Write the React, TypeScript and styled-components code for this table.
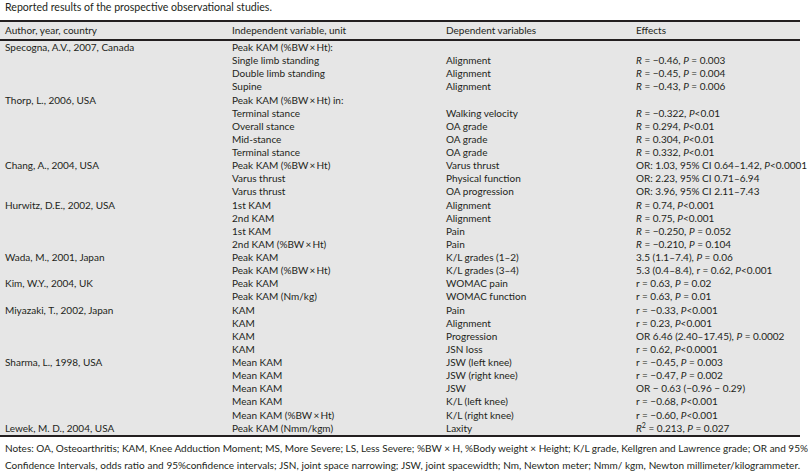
import React from "react";
import styled, { createGlobalStyle } from "styled-components";

const Global = createGlobalStyle`
  html, body { margin: 0; padding: 0; background: #ffffff; }
  body { font-family: Lato, "Liberation Sans", sans-serif; color: #231f20; }
`;

const Page = styled.div`
  width: 808px;
  height: 476px;
  overflow: hidden;
  background: #ffffff;
`;

const Caption = styled.div`
  height: 20px;
  padding-left: 5px;
  font-size: 10.6px;
  line-height: 14px;
  color: #231f20;
`;

const Table = styled.div`
  width: 800px;
  background: #e6e6e6;
  border-top: 2px solid #231f20;
  border-bottom: 2px solid #231f20;
`;

const Row = styled.div<{ $head?: boolean }>`
  display: grid;
  grid-template-columns: 227px 214px 190px 1fr;
  padding-left: 5px;
  height: ${(p) => (p.$head ? "17px" : "13.13px")};
  align-items: center;
  font-size: 10px;
  line-height: 13px;
  white-space: nowrap;
  border-bottom: ${(p) => (p.$head ? "2px solid #231f20" : "none")};
`;

const Body = styled.div``;

const Cell = styled.span``;

const Em = styled.i`
  font-style: italic;
`;

const Sup = styled.sup`
  font-size: 7px;
  line-height: 0;
  vertical-align: 4px;
`;

const Notes = styled.div`
  padding: 3px 8px 0 5px;
  font-size: 10px;
  line-height: 17px;
`;

const NoteLine = styled.div`
  text-align: justify;
  text-align-last: justify;
  white-space: nowrap;
`;

type R = [string, string, string, string];

const rows: R[] = [
  ["Specogna, A.V., 2007, Canada", "Peak KAM (%BW\u2009×\u2009Ht):", "", ""],
  ["", "Single limb standing", "Alignment", "*R* = −0.46, *P* = 0.003"],
  ["", "Double limb standing", "Alignment", "*R* = −0.45, *P* = 0.004"],
  ["", "Supine", "Alignment", "*R* = −0.43, *P* = 0.006"],
  ["Thorp, L., 2006, USA", "Peak KAM (%BW\u2009×\u2009Ht) in:", "", ""],
  ["", "Terminal stance", "Walking velocity", "*R* = −0.322, *P*<0.01"],
  ["", "Overall stance", "OA grade", "*R* = 0.294, *P*<0.01"],
  ["", "Mid-stance", "OA grade", "*R* = 0.304, *P*<0.01"],
  ["", "Terminal stance", "OA grade", "*R* = 0.332, *P*<0.01"],
  ["Chang, A., 2004, USA", "Peak KAM (%BW\u2009×\u2009Ht)", "Varus thrust", "OR: 1.03, 95% CI 0.64–1.42, *P*<0.0001"],
  ["", "Varus thrust", "Physical function", "OR: 2.23, 95% CI 0.71–6.94"],
  ["", "Varus thrust", "OA progression", "OR: 3.96, 95% CI 2.11–7.43"],
  ["Hurwitz, D.E., 2002, USA", "1st KAM", "Alignment", "*R* = 0.74, *P*<0.001"],
  ["", "2nd KAM", "Alignment", "*R* = 0.75, *P*<0.001"],
  ["", "1st KAM", "Pain", "*R* = −0.250, *P* = 0.052"],
  ["", "2nd KAM (%BW\u2009×\u2009Ht)", "Pain", "*R* = −0.210, *P* = 0.104"],
  ["Wada, M., 2001, Japan", "Peak KAM", "K/L grades (1–2)", "3.5 (1.1–7.4), *P* = 0.06"],
  ["", "Peak KAM (%BW\u2009×\u2009Ht)", "K/L grades (3–4)", "5.3 (0.4–8.4), r = 0.62, *P*<0.001"],
  ["Kim, W.Y., 2004, UK", "Peak KAM", "WOMAC pain", "r = 0.63, *P* = 0.02"],
  ["", "Peak KAM (Nm/kg)", "WOMAC function", "r = 0.63, *P* = 0.01"],
  ["Miyazaki, T., 2002, Japan", "KAM", "Pain", "r = −0.33, *P*<0.001"],
  ["", "KAM", "Alignment", "r = 0.23, *P*<0.001"],
  ["", "KAM", "Progression", "OR 6.46 (2.40–17.45), *P* = 0.0002"],
  ["", "KAM", "JSN loss", "r = 0.62, *P*<0.0001"],
  ["Sharma, L., 1998, USA", "Mean KAM", "JSW (left knee)", "r = −0.45, *P* = 0.003"],
  ["", "Mean KAM", "JSW (right knee)", "r = −0.47, *P* = 0.002"],
  ["", "Mean KAM", "JSW", "OR − 0.63 (−0.96 − 0.29)"],
  ["", "Mean KAM", "K/L (left knee)", "r = −0.68, *P*<0.001"],
  ["", "Mean KAM (%BW\u2009×\u2009Ht)", "K/L (right knee)", "r = −0.60, *P*<0.001"],
  ["Lewek, M. D., 2004, USA", "Peak KAM (Nmm/kgm)", "Laxity", "*R*^2^ = 0.213, *P* = 0.027"],
];

function renderEffect(s: string) {
  const parts = s.split(/(\*[^*]+\*|\^[^^]+\^)/);
  return parts.map((p, i) => {
    if (p.startsWith("*")) return <Em key={i}>{p.slice(1, -1)}</Em>;
    if (p.startsWith("^")) return <Sup key={i}>{p.slice(1, -1)}</Sup>;
    return <React.Fragment key={i}>{p}</React.Fragment>;
  });
}

export default function App() {
  return (
    <Page>
      <Global />
      <Caption>Reported results of the prospective observational studies.</Caption>
      <Table>
        <Row $head>
          <Cell>Author, year, country</Cell>
          <Cell>Independent variable, unit</Cell>
          <Cell>Dependent variables</Cell>
          <Cell>Effects</Cell>
        </Row>
        <Body>
          {rows.map((r, i) => (
            <Row key={i}>
              <Cell>{r[0]}</Cell>
              <Cell>{r[1]}</Cell>
              <Cell>{r[2]}</Cell>
              <Cell>{renderEffect(r[3])}</Cell>
            </Row>
          ))}
        </Body>
      </Table>
      <Notes>
        <NoteLine>
          Notes: OA, Osteoarthritis; KAM, Knee Adduction Moment; MS, More Severe; LS, Less Severe; %BW × H, %Body weight × Height; K/L grade, Kellgren and Lawrence grade; OR and 95%
        </NoteLine>
        <NoteLine>
          Confidence Intervals, odds ratio and 95%confidence intervals; JSN, joint space narrowing; JSW, joint spacewidth; Nm, Newton meter; Nmm/ kgm, Newton millimeter/kilogrammeter.
        </NoteLine>
      </Notes>
    </Page>
  );
}
